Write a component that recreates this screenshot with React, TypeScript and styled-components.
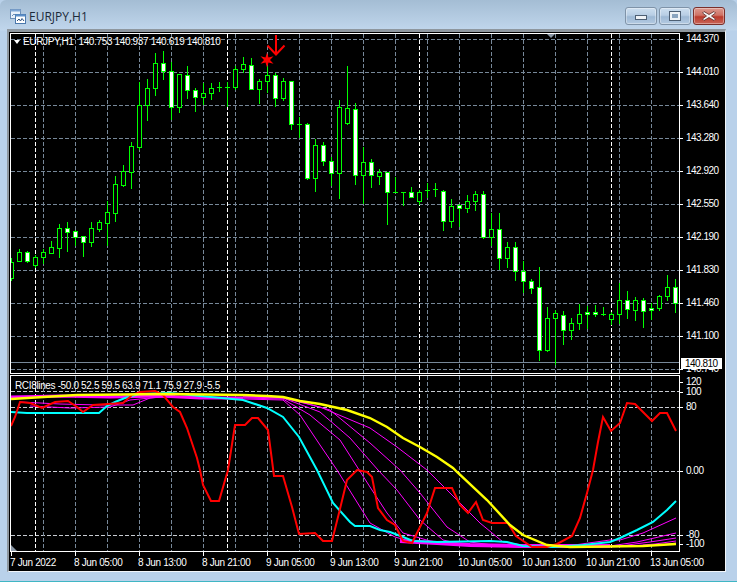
import React from 'react';
import styled, { createGlobalStyle } from 'styled-components';

const GREEN = '#00ff00';
const GRID = '#778899';
const MAGENTA = '#ff00ff';

// [high, bodyTop, bodyBottom, low, white body]
type Candle = [number, number, number, number, number];

const CANDLES: Candle[] = [
  [258, 262, 278, 281, 0], [249, 252, 261, 262, 0], [251, 252, 261, 263, 1], [255, 257, 265, 268, 0],
  [249, 252, 257, 264, 0], [241, 247, 253, 254, 0], [224, 228, 248, 258, 0], [222, 228, 232, 252, 1],
  [230, 231, 237, 246, 1], [236, 236, 242, 257, 1], [222, 228, 242, 247, 0], [220, 222, 229, 232, 0],
  [201, 212, 223, 246, 0], [176, 184, 213, 222, 0], [165, 171, 185, 187, 0], [142, 146, 172, 189, 0],
  [82, 105, 147, 150, 0], [79, 88, 105, 121, 0], [53, 63, 88, 96, 0], [51, 63, 71, 80, 1],
  [62, 71, 107, 120, 1], [74, 74, 107, 113, 0], [66, 75, 90, 99, 1], [88, 90, 97, 112, 1],
  [83, 93, 97, 105, 0], [83, 88, 93, 100, 0], [82, 87, 87, 92, 0], [82, 87, 87, 107, 0],
  [66, 69, 87, 90, 0], [57, 64, 69, 73, 0], [58, 65, 89, 90, 1], [79, 81, 89, 104, 0],
  [66, 75, 81, 93, 0], [73, 75, 98, 107, 1], [78, 81, 98, 101, 0], [81, 81, 124, 130, 1],
  [117, 124, 124, 138, 0], [123, 124, 178, 180, 1], [139, 145, 178, 192, 0], [142, 145, 161, 166, 1],
  [157, 161, 173, 186, 1], [100, 107, 173, 199, 0], [66, 108, 123, 125, 0], [103, 109, 175, 185, 1],
  [147, 162, 175, 204, 0], [159, 162, 175, 188, 1], [169, 172, 176, 185, 0], [172, 172, 192, 225, 1],
  [177, 192, 192, 193, 0], [192, 192, 192, 206, 0], [187, 192, 197, 198, 1], [190, 192, 201, 205, 0],
  [183, 190, 190, 198, 0], [183, 189, 189, 197, 0], [190, 191, 221, 231, 1], [199, 206, 221, 228, 0],
  [204, 205, 208, 227, 1], [195, 201, 208, 213, 0], [191, 194, 201, 211, 0], [191, 194, 237, 239, 1],
  [213, 229, 237, 246, 0], [213, 229, 258, 270, 1], [242, 247, 258, 268, 0], [242, 247, 271, 281, 1],
  [261, 271, 281, 293, 1], [279, 281, 288, 294, 1], [267, 287, 350, 361, 1], [307, 318, 350, 352, 0],
  [310, 313, 318, 365, 0], [311, 315, 330, 345, 1], [318, 323, 330, 340, 0], [304, 314, 323, 330, 0],
  [306, 312, 314, 329, 1], [305, 312, 314, 317, 1], [307, 314, 314, 316, 0], [312, 314, 319, 325, 0],
  [283, 300, 314, 324, 0], [291, 300, 309, 319, 1], [297, 300, 310, 321, 0], [298, 300, 311, 328, 1],
  [303, 308, 310, 320, 1], [295, 296, 308, 311, 0], [275, 287, 296, 301, 0], [279, 287, 303, 313, 1],
];

const PRICES = ['144.370', '144.010', '143.640', '143.280', '142.920', '142.550', '142.190', '141.830', '141.460', '141.100', '140.740'];
const TIMES = ['7 Jun 2022', '8 Jun 05:00', '8 Jun 13:00', '8 Jun 21:00', '9 Jun 05:00', '9 Jun 13:00', '9 Jun 21:00', '10 Jun 05:00', '10 Jun 13:00', '10 Jun 21:00', '13 Jun 05:00'];
const LEVELS = [
  { text: '120', top: 2 },
  { text: '100', top: 0 },
  { text: '80', top: 5 },
  { text: '0.00', top: 54 },
  { text: '-80', top: 54 },
  { text: '-100', top: -1 },
];

const NARROW_GRID = [43, 75, 107, 139, 171, 203, 235, 267, 299, 331, 363, 395, 427, 459, 491, 523, 555, 587, 619, 651];
const WIDE_GRID = [35, 227, 419, 611];
const MAIN_ROWS = [39, 72, 105, 138, 171, 204, 237, 270, 303, 336, 369];
const SUB_ROWS = [391, 407, 471, 535];

const YELLOW_LINE = '11,399 60,396 77,395 167,394 243,395 267,396 283,397 300,401 320,404 347,410 370,418 387,427 403,438 420,447 437,457 453,468 457,472 487,500 510,525 523,535 547,545 570,547 643,546 676,544';
const CYAN_LINE = '11,412 27,413 99,413 107,406 115,402 125,398 139,394 170,393 200,396 243,400 267,408 283,417 299,437 317,470 333,503 350,522 355,526 370,526 380,530 390,532 403,537 413,541 437,542 490,541 507,542 523,546 553,547 583,545 610,542 620,538 637,530 653,522 667,510 676,501';
const RED_LINE = '11,426 15,417 20,402 30,403 42,408 55,402 68,401 77,407 83,412 93,405 123,403 132,395 140,392 155,391 163,395 173,407 180,412 187,428 197,458 200,470 203,485 211,501 219,501 228,470 235,425 245,425 252,418 258,418 268,430 274,476 283,476 292,507 299,534 315,533 323,541 332,541 339,513 347,480 357,470 367,472 372,477 378,508 387,520 395,525 403,541 412,543 420,527 427,513 435,488 452,488 460,505 468,513 476,502 483,520 492,523 508,523 516,536 532,547 547,547 557,544 572,536 580,518 587,493 593,470 598,442 603,417 611,431 620,423 627,403 635,404 652,421 660,413 667,413 676,431';
const THIN_LINES = [
  '243,396 283,398 320,407 370,428 397,447 427,470 457,500 480,523 503,542 530,546',
  '243,397 283,397 330,410 370,443 400,470 420,493 447,527 470,542 500,546',
  '243,397 283,398 320,412 350,438 378,470 397,490 420,520 443,540 470,546',
  '243,398 283,399 310,415 340,440 370,487 387,513 403,533 430,541 460,545',
  '243,399 283,400 300,415 320,445 337,470 370,523 395,537 420,544',
  '20,402 60,404 100,405 133,405 150,398 175,396',
  '30,406 70,408 110,407 130,400 160,397 200,396',
  '560,547 610,540 620,540 643,533 676,518',
  '570,547 610,546 637,542 676,533',
  '580,547 620,546 650,542 676,538',
  '590,547 630,546 655,544 676,541',
  '600,547 640,546 660,545 676,543',
];

const GlobalStyle = createGlobalStyle`
  html, body {
    margin: 0;
    padding: 0;
    overflow: hidden;
    background: #b9d1ea;
  }
`;

const starPoints = (cx: number, cy: number) => {
  const points: string[] = [];
  for (let i = 0; i < 12; i++) {
    const r = i % 2 === 0 ? 7.5 : 3;
    const a = (Math.PI / 6) * i - Math.PI / 2;
    points.push(`${(cx + r * Math.cos(a)).toFixed(1)},${(cy + r * Math.sin(a)).toFixed(1)}`);
  }
  return points.join(' ');
};

const GridLines = ({ rows, top, bottom }: { rows: number[]; top: number; bottom: number }) => (
  <g shapeRendering="crispEdges" strokeWidth={1}>
    {rows.map((y) => (
      <line key={y} x1={11} x2={679} y1={y + 0.5} y2={y + 0.5} stroke={rows.length > 4 ? GRID : '#c8ccd2'} strokeDasharray="4 2" />
    ))}
    {NARROW_GRID.map((x) => (
      <line key={x} x1={x + 0.5} x2={x + 0.5} y1={top} y2={bottom} stroke={GRID} strokeDasharray="4 2" />
    ))}
    {WIDE_GRID.map((x) => (
      <line key={x} x1={x + 0.5} x2={x + 0.5} y1={top} y2={bottom} stroke="#fff" strokeDasharray="4 2" />
    ))}
  </g>
);

const CandleMark = ({ candle, index }: { candle: Candle; index: number }) => {
  const [high, top, bottom, low, white] = candle;
  const x = 11.5 + 8 * index;
  return (
    <g shapeRendering="crispEdges">
      <line x1={x} x2={x} y1={high} y2={low} stroke={GREEN} />
      {top === bottom ? (
        <line x1={x - 2.5} x2={x + 2.5} y1={top + 0.5} y2={top + 0.5} stroke={GREEN} />
      ) : (
        <rect x={x - 2} y={top + 0.5} width={4} height={bottom - top} fill={white ? '#fff' : '#000'} stroke={GREEN} />
      )}
    </g>
  );
};

const PriceChart = () => (
  <ChartSvg width={668} height={339} viewBox="11 34 668 339">
    <GridLines rows={MAIN_ROWS} top={34} bottom={373} />
    <line x1={11} x2={679} y1={362.5} y2={362.5} stroke={GRID} shapeRendering="crispEdges" />
    {CANDLES.map((candle, i) => (
      <CandleMark key={i} candle={candle} index={i} />
    ))}
    <polygon points={starPoints(267, 60)} fill="#ff0000" />
    <path d="M276 35V55M267.5 45.5L276 54.5L284.5 45.5" fill="none" stroke="#ff0000" strokeWidth={2} />
    <polygon points="547,34 555,34 551,38" fill="#8a97a6" />
  </ChartSvg>
);

const IndicatorChart = () => (
  <ChartSvg width={668} height={175} viewBox="11 376 668 175">
    <GridLines rows={SUB_ROWS} top={376} bottom={551} />
    <g fill="none" strokeLinejoin="miter">
      {THIN_LINES.map((points) => (
        <polyline key={points} points={points} stroke={MAGENTA} strokeWidth={1} />
      ))}
      <polyline points="11,397 60,396 110,397 160,396 200,398 243,398" stroke={MAGENTA} strokeWidth={3} />
      <polyline points="400,541 437,543 470,545 520,546 610,546" stroke={MAGENTA} strokeWidth={4} />
      <polyline points={CYAN_LINE} stroke="#00ffff" strokeWidth={2} />
      <polyline points={RED_LINE} stroke="#ff0000" strokeWidth={2} />
      <polyline points={YELLOW_LINE} stroke="#ffff00" strokeWidth={2.4} />
    </g>
    <polygon points="11,545 11,551 17,551" fill="#8a97a6" />
  </ChartSvg>
);

const WindowIcon = () => (
  <svg width={16} height={16} viewBox="0 0 16 16">
    <rect x={0.5} y={0.5} width={10} height={9} fill="#e8f0fa" stroke="#6d8fb8" />
    <rect x={0.5} y={0.5} width={10} height={2} fill="#7fa6d4" />
    <rect x={5.5} y={5.5} width={10} height={9} fill="#fff" stroke="#4a78ad" />
    <rect x={5.5} y={5.5} width={10} height={2} fill="#5d8fc9" />
    <path d="M7 12L9 10L10.5 12L12 9.5L14 12" fill="none" stroke="#2b4f7e" />
    <path d="M2 7L4 5L5 6" fill="none" stroke="#6d8fb8" />
  </svg>
);

const App = () => (
  <Window>
    <GlobalStyle />
    <TitleBar>
      <WindowIcon />
      <Title>EURJPY,H1</Title>
      <Controls>
        <CaptionButton>
          <MinimizeGlyph />
        </CaptionButton>
        <CaptionButton>
          <MaximizeGlyph />
        </CaptionButton>
        <CaptionButton $close>
          <svg width={16} height={12} viewBox="0 0 16 12">
            <path d="M3 1.5L8 4.5L13 1.5L14.5 3L10.5 6L14.5 9L13 10.5L8 7.5L3 10.5L1.5 9L5.5 6L1.5 3Z" fill="#f4f4f4" stroke="#5a2a26" strokeWidth={0.8} />
          </svg>
        </CaptionButton>
      </Controls>
    </TitleBar>
    <Client>
      <Terminal>
        <MainPanel>
          <PriceChart />
          <Legend>
            <LegendArrow />
            <span>EURJPY,H1&nbsp; 140.753 140.937 140.619 140.810</span>
          </Legend>
        </MainPanel>
        <PriceScale>
          {PRICES.map((price) => (
            <ScaleLabel key={price}>{price}</ScaleLabel>
          ))}
          <PriceTag>140.810</PriceTag>
        </PriceScale>
        <SubPanel>
          <IndicatorChart />
          <Legend $sub>RCI8lines -50.0 52.5 59.5 63.9 71.1 75.9 27.9 -5.5</Legend>
        </SubPanel>
        <LevelScale>
          {LEVELS.map((level) => (
            <ScaleLabel key={level.text} $top={level.top}>
              {level.text}
            </ScaleLabel>
          ))}
        </LevelScale>
        <TimeAxis>
          {TIMES.map((time) => (
            <TimeLabel key={time}>{time}</TimeLabel>
          ))}
        </TimeAxis>
      </Terminal>
    </Client>
  </Window>
);

export default App;

const Window = styled.div`
  width: 737px;
  height: 582px;
  display: flex;
  flex-direction: column;
  overflow: hidden;
  box-sizing: border-box;
  border-radius: 6px 6px 0 0;
  border-bottom: 1px solid #3fb6c4;
  background: linear-gradient(180deg, #a4bdd4 0, #c0d6ec 30px, #b9d1ea 31px);
  font-family: 'Liberation Sans', Arial, sans-serif;
`;

const TitleBar = styled.div`
  height: 29px;
  flex: none;
  display: flex;
  align-items: center;
  padding: 4px 12px 0 10px;
  box-sizing: border-box;
`;

const Title = styled.span`
  margin-left: 3px;
  font-family: 'Open Sans', sans-serif;
  font-size: 12px;
  color: #1c2a3a;
`;

const Controls = styled.div`
  margin-left: auto;
  margin-top: -1px;
  display: flex;
  gap: 2px;
`;

const CaptionButton = styled.div<{ $close?: boolean }>`
  width: 32px;
  height: 18px;
  box-sizing: border-box;
  display: flex;
  align-items: center;
  justify-content: center;
  border: 1px solid ${(p) => (p.$close ? '#7a2f2a' : '#7f93a8')};
  border-radius: 3px;
  box-shadow: inset 0 0 0 1px rgba(255, 255, 255, 0.35);
  background: ${(p) =>
    p.$close
      ? 'linear-gradient(180deg, #dc9a90 0, #cf7265 45%, #bb3a2c 55%, #c9665a 100%)'
      : 'linear-gradient(180deg, #cddff0 0, #b8cee4 45%, #9db8d4 55%, #b4cbe2 100%)'};
`;

const MinimizeGlyph = styled.div`
  width: 10px;
  height: 3px;
  margin-top: 3px;
  background: #eef2f6;
  border: 1px solid #4d5f73;
`;

const MaximizeGlyph = styled.div`
  width: 6px;
  height: 4px;
  border: 2px solid #eef2f6;
  outline: 1px solid #4d5f73;
  background: #8aa4bf;
`;

const Client = styled.div`
  margin: 0 11px 0 7px;
  height: 543px;
  flex: none;
  box-sizing: border-box;
  border-top: 3px solid #8e979f;
  border-left: 2px solid #8e979f;
  border-right: 1px solid #f2f6fa;
  border-bottom: 1px solid #f2f6fa;
  background: #000;
`;

const Terminal = styled.div`
  padding: 1px 0 0 1px;
  display: grid;
  grid-template-columns: 670px 45px;
  grid-template-rows: 341px 177px 20px;
  row-gap: 1px;
  color: #fff;
`;

const ChartSvg = styled.svg`
  display: block;
`;

const MainPanel = styled.div`
  position: relative;
  box-sizing: border-box;
  border: 1px solid #fff;
  overflow: hidden;
`;

const SubPanel = styled(MainPanel)`
  border-bottom: 1px solid #fff;
`;

const Legend = styled.div<{ $sub?: boolean }>`
  position: absolute;
  top: ${(p) => (p.$sub ? '4px' : '2px')};
  left: ${(p) => (p.$sub ? '4px' : '3px')};
  display: flex;
  align-items: center;
  gap: 3px;
  font-size: 10px;
  line-height: 12px;
  letter-spacing: -0.35px;
  white-space: nowrap;
  color: #fff;
`;

const LegendArrow = styled.i`
  width: 0;
  height: 0;
  border-left: 3.5px solid transparent;
  border-right: 3.5px solid transparent;
  border-top: 4px solid #fff;
`;

const PriceScale = styled.div`
  position: relative;
  height: 340px;
  overflow: hidden;
  padding-top: 1px;
  box-sizing: border-box;
  display: flex;
  flex-direction: column;
  gap: 23px;
`;

const LevelScale = styled.div`
  display: flex;
  flex-direction: column;
`;

const ScaleLabel = styled.div<{ $top?: number }>`
  position: relative;
  flex: none;
  height: 10px;
  margin-top: ${(p) => p.$top ?? 0}px;
  padding-left: 6px;
  font-size: 10px;
  line-height: 10px;
  letter-spacing: -0.5px;
  color: #fff;
  &::before {
    content: '';
    position: absolute;
    left: 0;
    top: 5px;
    width: 3px;
    height: 1px;
    background: #fff;
  }
`;

const PriceTag = styled.div`
  position: absolute;
  left: 1px;
  top: 325px;
  width: 41px;
  height: 11px;
  padding-left: 4px;
  box-sizing: border-box;
  background: #fff;
  color: #000;
  font-size: 10px;
  line-height: 11px;
  letter-spacing: -0.5px;
`;

const TimeAxis = styled.div`
  grid-column: 1 / 3;
  margin-top: -1px;
  display: grid;
  grid-template-columns: repeat(11, 64px);
`;

const TimeLabel = styled.div`
  position: relative;
  padding-top: 5px;
  font-size: 10px;
  line-height: 12px;
  letter-spacing: -0.35px;
  white-space: nowrap;
  color: #fff;
  &::before {
    content: '';
    position: absolute;
    left: 1px;
    top: 0;
    width: 1px;
    height: 4px;
    background: #fff;
  }
`;
